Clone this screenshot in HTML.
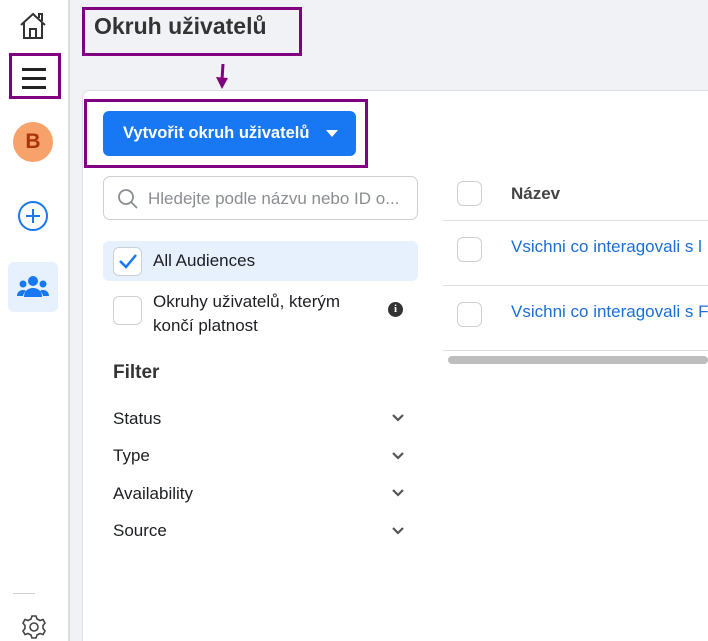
<!DOCTYPE html>
<html><head><meta charset="utf-8"><style>
*{margin:0;padding:0;box-sizing:border-box}
html,body{width:708px;height:641px;overflow:hidden}
body{background:#f0f2f5;font-family:"Liberation Sans",Roboto,sans-serif;position:relative;color:#1c1e21}
.a{position:absolute}
.cb{position:absolute;width:25px;height:25px;border:1px solid #ccd0d5;border-radius:6px;background:#fff}
.pb{position:absolute;border:3px solid #800080}
.chev{position:absolute;left:390px;width:16px;height:10px}
.fl{position:absolute;left:113px;font-size:17px;color:#1c1e21}
</style></head><body>
<div class="a" style="left:0;top:0;width:70px;height:641px;background:#fff;border-right:2px solid #dadde1"></div>
<svg class="a" style="left:18px;top:10px" width="30" height="30" viewBox="0 0 30 30" fill="none" stroke="#333" stroke-width="2"><path d="M3 15 L15 4 L27 15"/><path d="M6 13 V28 H24 V13"/><path d="M12 28 V19 H18 V28"/><path d="M21 8 V4 H24 V11"/></svg>
<div class="pb" style="left:9px;top:53px;width:52px;height:46px"></div>
<div class="a" style="left:22px;top:68px;width:24px;height:3px;background:#222"></div>
<div class="a" style="left:22px;top:77px;width:24px;height:3px;background:#222"></div>
<div class="a" style="left:22px;top:86px;width:24px;height:3px;background:#222"></div>
<div class="a" style="left:13px;top:122px;width:40px;height:40px;border-radius:50%;background:#f7a26b;color:#a8340c;font-weight:bold;font-size:21px;text-align:center;line-height:40px">B</div>
<svg class="a" style="left:17px;top:200px" width="32" height="32" viewBox="0 0 32 32" fill="none" stroke="#1877f2" stroke-width="2"><circle cx="16" cy="16" r="14"/><path d="M16 9V23M9 16H23"/></svg>
<div class="a" style="left:8px;top:262px;width:50px;height:50px;border-radius:6px;background:#e7f0fd"></div>
<svg class="a" style="left:17px;top:275px" width="32" height="24" viewBox="0 0 32 24" fill="#1877f2"><circle cx="16" cy="6" r="5"/><path d="M7 22c0-6 4-9 9-9s9 3 9 9z"/><circle cx="6" cy="9" r="3.5"/><circle cx="26" cy="9" r="3.5"/><path d="M0 21c0-4 3-6 6-6 2 0 3 1 3 1-2 2-3 4-3 5z"/><path d="M32 21c0-4-3-6-6-6-2 0-3 1-3 1 2 2 3 4 3 5z"/></svg>
<div class="a" style="left:13px;top:593px;width:22px;height:1px;background:#ccd0d5"></div>
<svg class="a" style="left:21px;top:614px" width="26" height="26" viewBox="0 0 26 26" fill="none" stroke="#444" stroke-width="1.6"><circle cx="13" cy="13" r="4"/><path d="M11 2h4l1 3 3 1.5 3-1 2 3.5-2 2.5v3l2 2.5-2 3.5-3-1-3 1.5-1 3h-4l-1-3-3-1.5-3 1-2-3.5 2-2.5v-3l-2-2.5 2-3.5 3 1 3-1.5z"/></svg>
<div class="pb" style="left:82px;top:7px;width:220px;height:49px"></div>
<div class="a" style="left:94px;top:13px;font-size:23px;font-weight:bold;color:#333">Okruh uživatelů</div>
<svg class="a" style="left:215px;top:64px" width="14" height="26" viewBox="0 0 14 26"><path d="M8 0 L7 16" stroke="#800080" stroke-width="3"/><path d="M1 13 L13 14 L7 25z" fill="#800080"/></svg>
<div class="a" style="left:82px;top:90px;width:626px;height:551px;background:#fff;border:1px solid #dadde1;border-right:none;border-bottom:none;border-top-left-radius:8px"></div>
<div class="pb" style="left:84px;top:99px;width:284px;height:69px"></div>
<div class="a" style="left:103px;top:111px;width:253px;height:45px;background:#1877f2;border-radius:6px;color:#fff;font-weight:bold;font-size:16.5px;line-height:45px;padding-left:20px">Vytvořit okruh uživatelů</div>
<svg class="a" style="left:325px;top:129px" width="14" height="9" viewBox="0 0 14 9"><path d="M1 1H13L7 8z" fill="#fff"/></svg>
<div class="a" style="left:103px;top:176px;width:315px;height:44px;border:1px solid #ccd0d5;border-radius:7px;background:#fff"></div>
<svg class="a" style="left:117px;top:188px" width="22" height="22" viewBox="0 0 22 22" fill="none" stroke="#8a8d91" stroke-width="1.8"><circle cx="9" cy="9" r="7"/><path d="M14 14L20 20"/></svg>
<div class="a" style="left:148px;top:189px;font-size:17px;color:#8a8d91;white-space:nowrap">Hledejte podle názvu nebo ID o...</div>
<div class="a" style="left:103px;top:241px;width:315px;height:40px;background:#e7f0fd;border-radius:6px"></div>
<div class="cb" style="left:113px;top:247px;width:29px;height:29px"></div>
<svg class="a" style="left:118px;top:253px" width="20" height="16" viewBox="0 0 20 16"><path d="M2 8L8 14L18 2" stroke="#1877f2" stroke-width="2.5" fill="none"/></svg>
<div class="a" style="left:153px;top:251px;font-size:17px">All Audiences</div>
<div class="cb" style="left:113px;top:296px;width:29px;height:29px"></div>
<div class="a" style="left:153px;top:290px;font-size:17px;line-height:24px">Okruhy uživatelů, kterým<br>končí platnost</div>
<div class="a" style="left:388px;top:302px;width:15px;height:15px;border-radius:50%;background:#333;color:#fff;font-size:11px;font-weight:bold;text-align:center;line-height:15px;font-family:'Liberation Serif',serif">i</div>
<div class="a" style="left:113px;top:362px;font-size:19px;font-weight:bold;color:#333">Filter</div>
<div class="fl" style="top:409px">Status</div>
<div class="fl" style="top:446px">Type</div>
<div class="fl" style="top:484px">Availability</div>
<div class="fl" style="top:521px">Source</div>
<svg class="chev" style="top:413px" viewBox="0 0 16 10"><path d="M3 2L8 7L13 2" stroke="#555" stroke-width="2.2" fill="none"/></svg>
<svg class="chev" style="top:451px" viewBox="0 0 16 10"><path d="M3 2L8 7L13 2" stroke="#555" stroke-width="2.2" fill="none"/></svg>
<svg class="chev" style="top:488px" viewBox="0 0 16 10"><path d="M3 2L8 7L13 2" stroke="#555" stroke-width="2.2" fill="none"/></svg>
<svg class="chev" style="top:526px" viewBox="0 0 16 10"><path d="M3 2L8 7L13 2" stroke="#555" stroke-width="2.2" fill="none"/></svg>
<div class="cb" style="left:457px;top:181px"></div>
<div class="a" style="left:511px;top:184px;font-size:17px;font-weight:bold;color:#444">Název</div>
<div class="a" style="left:443px;top:220px;width:265px;height:1px;background:#dadde1"></div>
<div class="cb" style="left:457px;top:237px"></div>
<div class="a" style="left:511px;top:237px;font-size:17px;color:#1a6ed8;white-space:nowrap">Vsichni co interagovali s l</div>
<div class="a" style="left:443px;top:285px;width:265px;height:1px;background:#dadde1"></div>
<div class="cb" style="left:457px;top:302px"></div>
<div class="a" style="left:511px;top:302px;font-size:17px;color:#1a6ed8;white-space:nowrap">Vsichni co interagovali s F</div>
<div class="a" style="left:443px;top:350px;width:265px;height:1px;background:#dadde1"></div>
<div class="a" style="left:448px;top:356px;width:260px;height:8px;border-radius:4px;background:#bdbdbd"></div>
</body></html>
